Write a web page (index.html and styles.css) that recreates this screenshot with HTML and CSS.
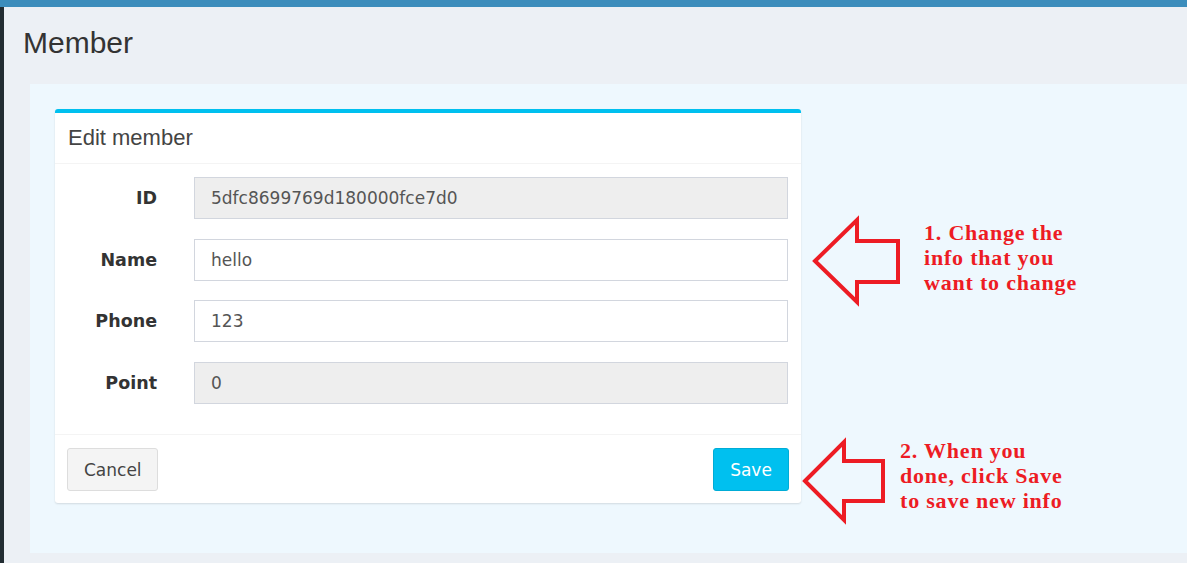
FILE: index.html
```html
<!DOCTYPE html>
<html>
<head>
<meta charset="utf-8">
<link rel="stylesheet" href="styles.css">
</head>
<body>
<div class="topbar"></div>
<div class="layout">
  <div class="sidebar"></div>
  <div class="content">
    <div class="page-header"><h1>Member</h1></div>
    <div class="panel">
      <div class="card">
        <div class="card-header">Edit member</div>
        <div class="card-body">
          <div class="row"><label>ID</label><div class="input disabled">5dfc8699769d180000fce7d0</div></div>
          <div class="row"><label>Name</label><div class="input">hello</div></div>
          <div class="row"><label>Phone</label><div class="input">123</div></div>
          <div class="row"><label>Point</label><div class="input disabled">0</div></div>
        </div>
        <div class="card-footer">
          <button class="btn btn-default">Cancel</button>
          <button class="btn btn-info">Save</button>
        </div>
      </div>
      <svg class="arrows" width="1157" height="469" viewBox="0 0 1157 469">
        <polygon points="785,177 827,136 827,157 868,157 868,198 827,198 827,218" />
        <polygon points="775,397 814,358 814,377 853,377 853,417 814,417 814,436" />
      </svg>
      <div class="note note-1">1. Change the<br>info that you<br>want to change</div>
      <div class="note note-2">2. When you<br>done, click Save<br>to save new info</div>
    </div>
  </div>
</div>
</body>
</html>
```
FILE: styles.css
```css
html, body {
  margin: 0;
  padding: 0;
}
body {
  background: #ecf0f5;
  font-family: "DejaVu Sans", Verdana, sans-serif;
  color: #333;
  height: 563px;
  overflow: hidden;
}
.topbar {
  height: 7px;
  background: #3c8dbc;
}
.layout {
  display: flex;
  height: 556px;
}
.sidebar {
  width: 4px;
  background: #222d32;
  flex: none;
}
.content {
  flex: 1;
  min-width: 0;
}
.page-header {
  padding: 18px 0 0 19px;
}
.page-header h1 {
  margin: 0;
  font-family: "Liberation Sans", Arial, sans-serif;
  font-weight: normal;
  font-size: 30px;
  line-height: 36px;
  color: #333;
}
.panel {
  position: relative;
  margin-top: 23px;
  margin-left: 26px;
  padding: 25px 25px 50px;
  background: #eef8fe;
  height: 394px;
}
.card {
  width: 746px;
  height: 394px;
  box-sizing: border-box;
  background: #fff;
  border-top: 4px solid #00c0ef;
  border-radius: 3px;
  box-shadow: 0 1px 2px rgba(0,0,0,0.12);
  display: flex;
  flex-direction: column;
}
.card-header {
  font-family: "Liberation Sans", Arial, sans-serif;
  font-size: 22px;
  line-height: 24px;
  padding: 13px 13px;
  color: #444;
  border-bottom: 1px solid #f4f4f4;
}
.card-body {
  padding: 13px 13px 0 0;
  display: flex;
  flex-direction: column;
  gap: 19.5px;
  flex: 1;
}
.row {
  display: grid;
  grid-template-columns: 102px 1fr;
  column-gap: 37px;
  align-items: center;
}
.row label {
  text-align: right;
  font-weight: bold;
  font-size: 17.5px;
  color: #333;
}
.input {
  height: 42px;
  box-sizing: border-box;
  border: 1px solid #d2d6de;
  padding: 0 16px;
  font-size: 17px;
  line-height: 40px;
  color: #555;
  background: #fff;
}
.input.disabled {
  background: #eee;
}
.card-footer {
  border-top: 1px solid #f4f4f4;
  padding: 13px 12px 12px;
  display: flex;
  justify-content: space-between;
  align-items: center;
}
.btn {
  font-family: "DejaVu Sans", Verdana, sans-serif;
  font-size: 17px;
  height: 43px;
  border-radius: 3px;
  padding: 0 16px;
  cursor: pointer;
}
.btn-default {
  width: 91px;
  background: #f4f4f4;
  border: 1px solid #ddd;
  color: #444;
}
.btn-info {
  width: 76px;
  background: #00c0ef;
  border: 1px solid #00acd6;
  color: #fff;
}
.arrows {
  position: absolute;
  left: 0;
  top: 0;
  pointer-events: none;
}
.arrows polygon {
  fill: none;
  stroke: #ed1c24;
  stroke-width: 4;
  stroke-linejoin: miter;
}
.note {
  position: absolute;
  font-family: "Liberation Serif", "Times New Roman", serif;
  font-weight: bold;
  font-size: 22px;
  line-height: 25px;
  letter-spacing: 0.8px;
  color: #ed1c24;
  white-space: nowrap;
}
.note-1 {
  left: 894px;
  top: 136px;
}
.note-2 {
  left: 870px;
  top: 354px;
}
```
